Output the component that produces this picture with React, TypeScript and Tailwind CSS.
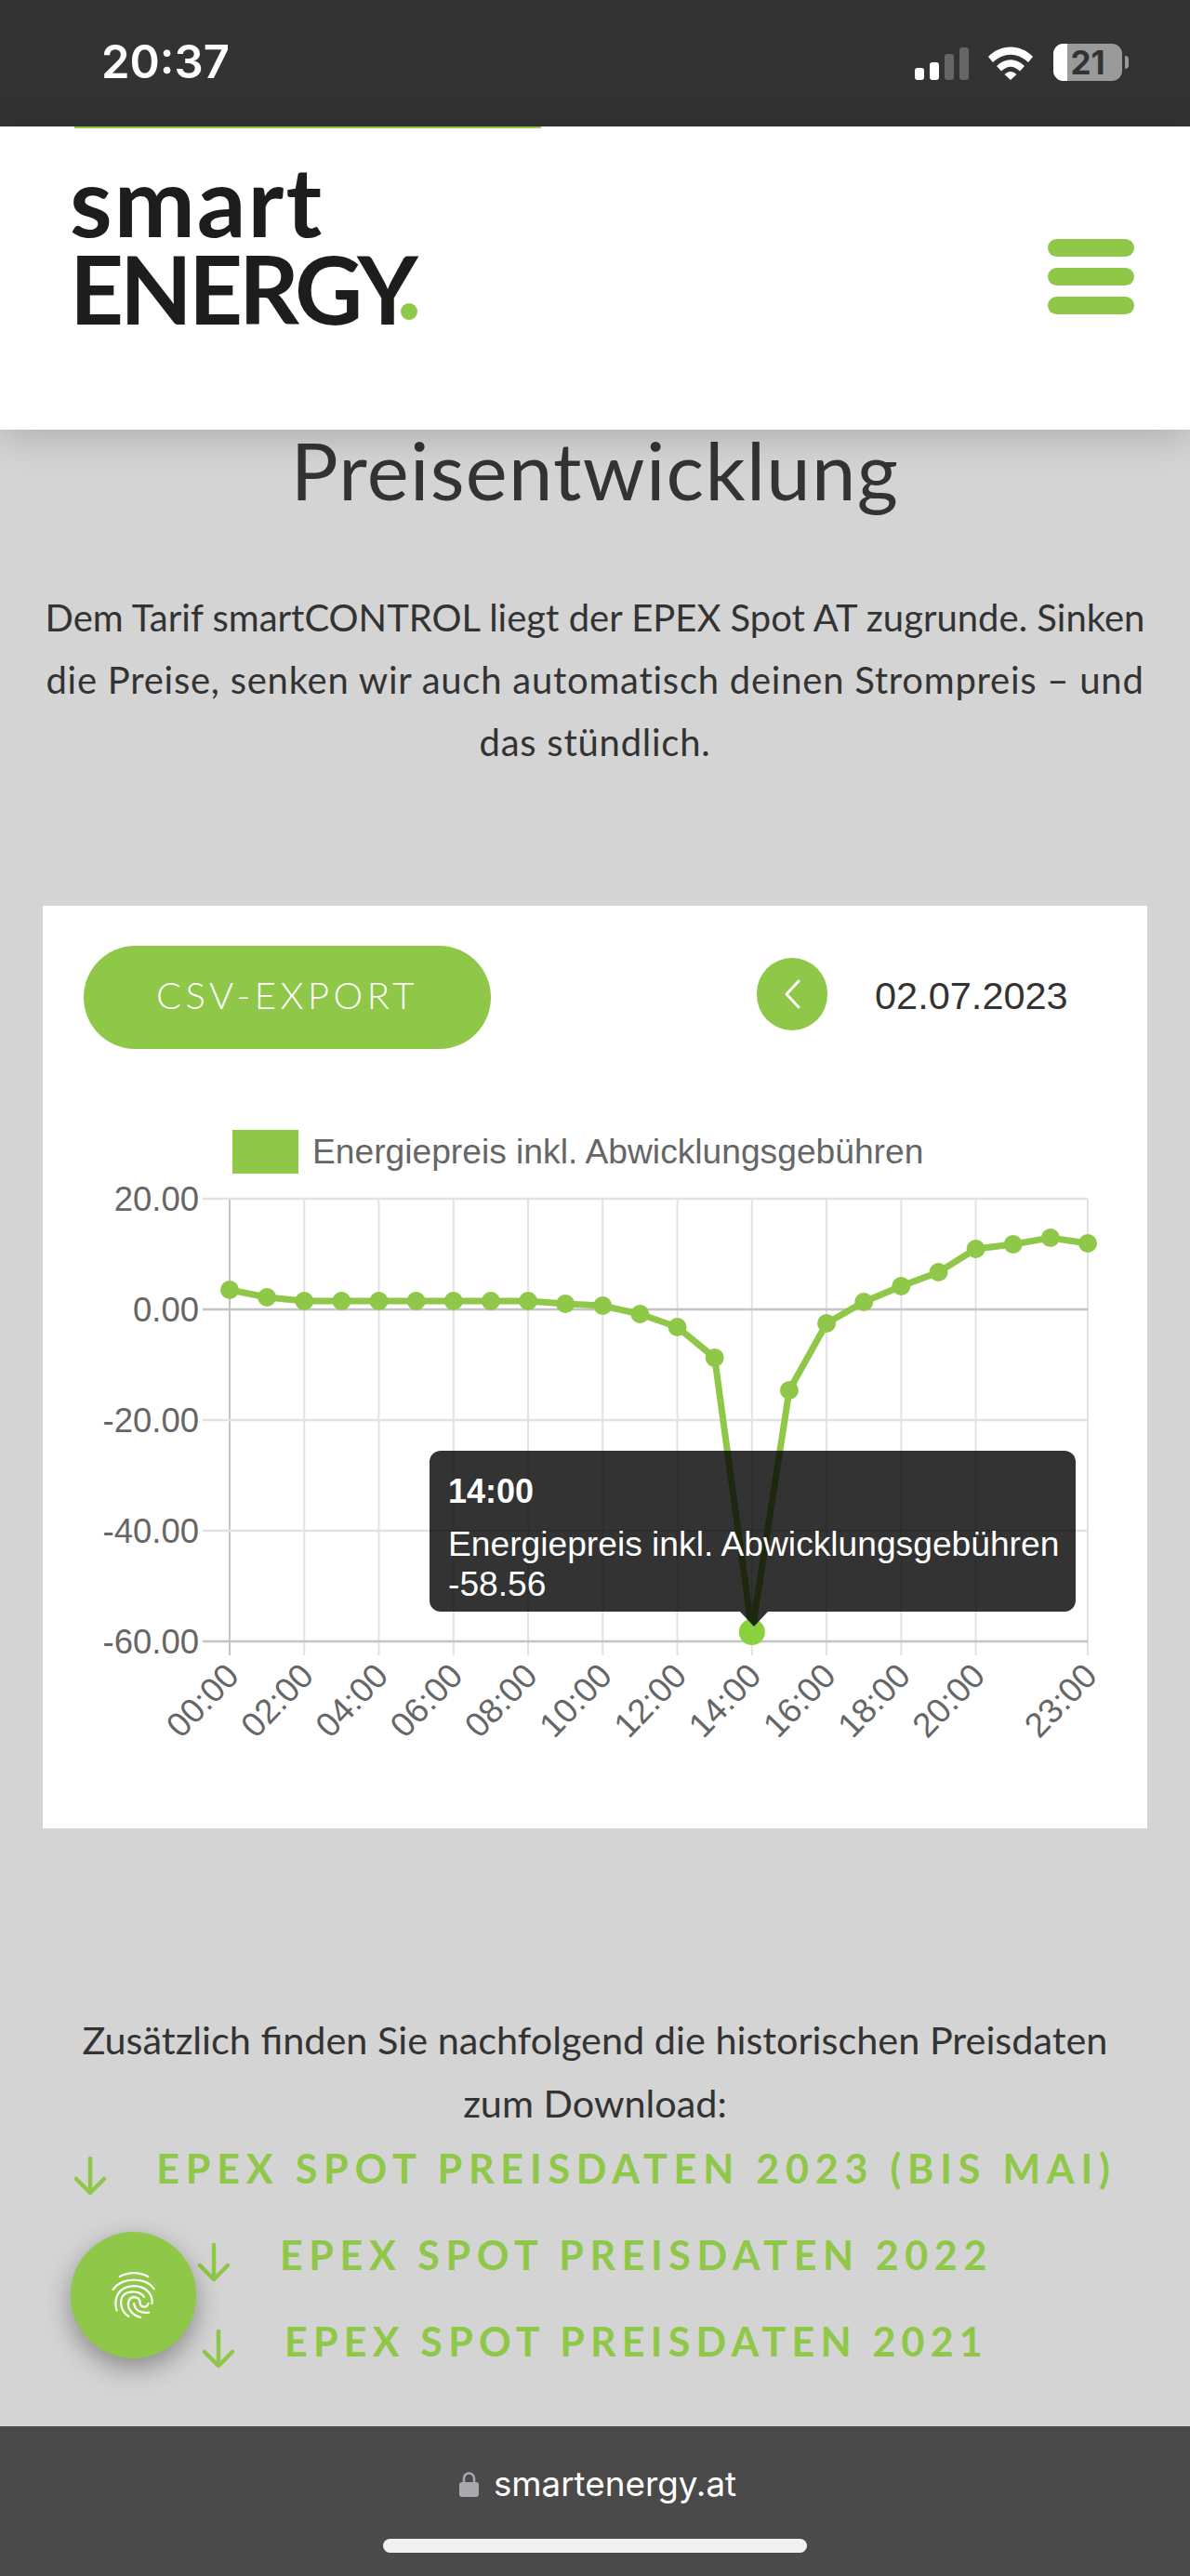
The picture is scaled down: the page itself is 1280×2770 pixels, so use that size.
import React from "react";

const GREEN = "#8fc749";

const prices = [
  1387, 1395, 1399, 1399, 1399, 1399, 1399, 1399, 1399, 1402, 1404, 1413, 1427,
  1460, 1755, 1495, 1423, 1400, 1383, 1368, 1343, 1338, 1331, 1337,
];
const hourX = (h: number) => 247 + h * 40.13;
const xLabels = [0, 2, 4, 6, 8, 10, 12, 14, 16, 18, 20, 23];
const yLabels = ["20.00", "0.00", "-20.00", "-40.00", "-60.00"];

// chart svg starts at page y 1190, card x is 46
const PriceChart = () => {
  const pts = prices.map((y, h) => [hourX(h) - 46, y - 1190]);
  return (
    <svg width="1188" height="720" className="block" style={{ fontFamily: "'Liberation Sans', sans-serif" }}>
      {xLabels.map((h) => (
        <line key={h} x1={hourX(h) - 46} x2={hourX(h) - 46} y1={99} y2={590} stroke={h === 0 ? "#c4c4c4" : "#e2e2e2"} strokeWidth="2" />
      ))}
      {yLabels.map((l, i) => (
        <g key={l}>
          <line x1={172} x2={1124} y1={99 + i * 119} y2={99 + i * 119} stroke={i === 1 || i === 4 ? "#c4c4c4" : "#e2e2e2"} strokeWidth="2.5" />
          <text x={168} y={99 + i * 119 + 13} textAnchor="end" fontSize="36.500" fill="#666">
            {l}
          </text>
        </g>
      ))}
      {xLabels.map((h) => (
        <text key={h} textAnchor="end" fontSize="37" fill="#666" transform={`translate(${hourX(h) - 46 + 12} 614) rotate(-46)`}>
          {String(h).padStart(2, "0")}:00
        </text>
      ))}
      <polyline points={pts.map((p) => p.join(",")).join(" ")} fill="none" stroke={GREEN} strokeWidth="7" />
      {pts.map(([x, y], h) => (
        <circle key={h} cx={x} cy={y} r={h === 14 ? 14 : 10} fill={h === 14 ? "#8ad13f" : GREEN} />
      ))}
    </svg>
  );
};

const DownloadLink = ({ label, tracking }: { label: string; tracking: string }) => (
  <div className="flex justify-center h-[93px]">
    <svg width="36" height="42" viewBox="0 0 36 42" className="mt-[17px] mr-[53px] shrink-0">
      <path d="M18 2 V39 M3 24 L18 39 L33 24" fill="none" stroke={GREEN} strokeWidth="4.500" strokeLinecap="round" strokeLinejoin="round" />
    </svg>
    <span className={`text-[43px] leading-[60px] font-bold text-[#8fc749] whitespace-nowrap ${tracking}`}>{label}</span>
  </div>
);

export default function App() {
  return (
    <div className="relative h-[2770px] w-[1280px] flex flex-col bg-[#d4d4d4] overflow-hidden font-['Lato',sans-serif] text-[#333]">
      <div className="h-[136px] shrink-0 bg-[#333] flex items-center justify-between pl-[109px] pr-[66px] pb-[2px]">
        <span className="text-[49px] font-semibold text-white font-['Inter',sans-serif]">20:37</span>
        <div className="flex items-center">
          <div className="flex items-end gap-[6px] h-[35px] mt-[2px]">
            <div className="w-[10px] h-[13px] rounded-[3px] bg-white" />
            <div className="w-[10px] h-[19px] rounded-[3px] bg-white" />
            <div className="w-[10px] h-[28px] rounded-[3px] bg-[#666]" />
            <div className="w-[10px] h-[35px] rounded-[3px] bg-[#666]" />
          </div>
          <svg width="50" height="38" viewBox="0 0 50 38" className="ml-[20px]">
            <path d="M1 13 C14 -1 36 -1 49 13 L44 19 C32 8 18 8 6 19 Z" fill="#fff" />
            <path d="M10 23 C19 14 31 14 40 23 L35 28.500 C28 22 22 22 15 28.500 Z" fill="#fff" />
            <path d="M18.500 32 C23 28 27 28 31.500 32 L25 38 Z" fill="#fff" />
          </svg>
          <div className="relative ml-[21px] w-[74px] h-[40px] rounded-[11px] bg-[#9a9a9a] overflow-hidden flex items-center justify-center">
            <div className="absolute left-0 top-0 h-full w-[15px] bg-white" />
            <span className="relative text-[35px] font-bold leading-none text-[#333] font-['Inter',sans-serif]">21</span>
          </div>
          <div className="ml-[3px] w-[4px] h-[14px] rounded-r-full bg-[#9a9a9a]" />
        </div>
      </div>

      <header className="relative z-10 h-[326px] shrink-0 bg-white shadow-[0_6px_40px_rgba(0,0,0,0.2)] pl-[75px] pr-[60px] flex justify-between">
        <div className="absolute left-[80px] top-0 w-[502px] h-[2px] bg-[#8fc749]" />
        <div className="pt-[32px] text-[#1d1d1b] font-bold">
          <div className="text-[104px] leading-[94px] tracking-[2px]">smart</div>
          <div className="flex items-end text-[101px] leading-[97px] tracking-[-4px]">
            ENERGY
            <div className="-ml-[15px] mb-[15px] w-[18px] h-[18px] rounded-full bg-[#8fc749]" />
          </div>
        </div>
        <div className="flex flex-col gap-[12px] w-[93px] pt-[121px]">
          <div className="h-[19px] rounded-full bg-[#8fc749]" />
          <div className="h-[19px] rounded-full bg-[#8fc749]" />
          <div className="h-[19px] rounded-full bg-[#8fc749]" />
        </div>
      </header>

      <main className="flex-1 px-[46px]">
        <h1 className="-mt-[7px] text-[85px] leading-[100px] text-center tracking-[1.300px]">Preisentwicklung</h1>
        <p className="mt-[76px] text-[40px] leading-[67px] text-center whitespace-nowrap -mx-[46px]">
          Dem Tarif smartCONTROL liegt der EPEX Spot AT zugrunde. Sinken
          <br />
          <span className="tracking-[0.750px]">die Preise, senken wir auch automatisch deinen Strompreis – und</span>
          <br />
          <span className="tracking-[0.750px]">das stündlich.</span>
        </p>

        <div className="relative mt-[142px] h-[992px] bg-white">
          <div className="flex items-center pt-[43px] pl-[44px]">
            <button className="w-[438px] h-[111px] pb-[6px] rounded-full bg-[#8fc749] text-white text-[40px] tracking-[4.500px] font-light">CSV-EXPORT</button>
            <div className="ml-[286px] mb-[8px] w-[76px] h-[78px] rounded-full bg-[#8fc749] flex items-center justify-center">
              <svg width="20" height="32" viewBox="0 0 20 32">
                <path d="M17 2 L4 16 L17 30" fill="none" stroke="#fff" strokeWidth="3" strokeLinecap="round" strokeLinejoin="round" />
              </svg>
            </div>
            <span className="ml-[51px] mb-[3px] text-[41.500px] text-[#333] font-['Liberation_Sans',sans-serif]">02.07.2023</span>
          </div>

          <div className="flex items-center ml-[204px] mt-[87px] h-[47px] font-['Liberation_Sans',sans-serif]">
            <div className="w-[71px] h-[47px] bg-[#8fc749]" />
            <span className="ml-[15px] text-[37.200px] text-[#666]">Energiepreis inkl. Abwicklungsgebühren</span>
          </div>

          <div className="absolute left-0 top-[216px]">
            <PriceChart />
          </div>

          <div className="absolute left-[416px] top-[586px] w-[695px] h-[173px] rounded-[12px] bg-black/80 pl-[20px] pt-[22px] text-white font-['Liberation_Sans',sans-serif] text-[37.200px] leading-[43px]">
            <div className="font-bold text-[36px]">14:00</div>
            <div className="mt-[14px]">Energiepreis inkl. Abwicklungsgebühren</div>
            <div>-58.56</div>
            <div className="absolute left-[334px] top-[173px] w-0 h-0 border-x-[15px] border-x-transparent border-t-[16px] border-t-black/80" />
          </div>
        </div>

        <p className="mt-[193px] text-[41.400px] leading-[68px] text-center whitespace-nowrap">
          Zusätzlich finden Sie nachfolgend die historischen Preisdaten
          <br />
          zum Download:
        </p>
        <div className="mt-[7px] -mx-[46px]">
          <DownloadLink label="EPEX SPOT PREISDATEN 2023 (BIS MAI)" tracking="tracking-[6.800px]" />
          <DownloadLink label="EPEX SPOT PREISDATEN 2022" tracking="tracking-[6.600px]" />
          <DownloadLink label="EPEX SPOT PREISDATEN 2021" tracking="tracking-[6.200px]" />
        </div>
      </main>

      <div className="absolute left-[76px] top-[2400px] w-[135px] h-[136px] rounded-full bg-[#8fc749] shadow-[0_10px_28px_rgba(0,0,0,0.35)] flex items-center justify-center">
        <svg width="50" height="54" viewBox="170 150 155 168" fill="none" stroke="#fff" strokeWidth="7" strokeLinecap="round">
          <path d="M200 172 Q248 148 295 172" />
          <path d="M178 215 Q200 183 248 183 Q295 183 315 213" />
          <path d="M190 285 C180 250 190 205 248 203 C290 203 312 235 308 262" />
          <path d="M230 305 C205 290 200 260 208 240 C220 218 265 215 282 240" />
          <path d="M270 308 C235 300 222 270 232 250 C240 235 268 240 268 258 C268 275 290 280 296 262" />
          <path d="M298 292 C270 295 250 285 248 262" />
        </svg>
      </div>

      <footer className="h-[161px] shrink-0 bg-[#4a4a4a] flex flex-col items-center">
        <div className="flex items-center gap-[16px] mt-[40px] h-[44px] font-['Inter',sans-serif] pl-[6px]">
          <svg width="21" height="27" viewBox="0 0 21 27">
            <path d="M5 12 V7 a5.500 5.500 0 0 1 11 0 V12" fill="none" stroke="#a8a8ae" strokeWidth="2.500" />
            <rect x="0" y="11" width="21" height="16" rx="3" fill="#a8a8ae" />
          </svg>
          <span className="text-[36.800px] text-white">smartenergy.at</span>
        </div>
        <div className="mt-[37px] w-[456px] h-[15px] rounded-full bg-[#f0f0f0]" />
      </footer>
    </div>
  );
}
